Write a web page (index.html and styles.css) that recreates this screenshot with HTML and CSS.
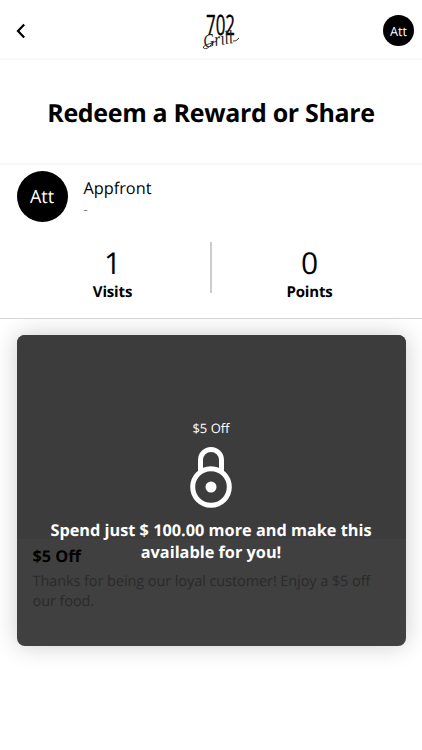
FILE: index.html
```html
<!DOCTYPE html>
<html lang="en">
<head>
<meta charset="utf-8">
<meta name="viewport" content="width=device-width, initial-scale=1">
<title>Redeem a Reward</title>
<link rel="stylesheet" href="styles.css">
</head>
<body>
<header class="topbar">
  <svg class="back" viewBox="0 0 10 16" aria-label="Back"><path d="M8.2 1.5 2 8l6.2 6.5"/></svg>
  <svg class="logo" viewBox="0 0 40 40" aria-label="702 Grill">
    <text class="logo-number" x="5" y="25" textLength="29" lengthAdjust="spacingAndGlyphs">702</text>
    <text class="logo-script" x="3" y="35" textLength="30" lengthAdjust="spacingAndGlyphs" transform="rotate(-9 20 35)">Grill</text>
    <path d="M12 31C10 37 5 40 2.500 38 1.500 35 9 34 16 31M32 31q3 1 6-3"/>
  </svg>
  <div class="avatar avatar-small">Att</div>
</header>
<section class="heading"><h1>Redeem a Reward or Share</h1></section>
<section class="profile">
  <div class="user">
    <div class="avatar">Att</div>
    <div class="user-text"><div class="name">Appfront</div><div class="detail">-</div></div>
  </div>
  <div class="stats">
    <div class="stat"><span class="value">1</span><span class="label">Visits</span></div>
    <div class="divider"></div>
    <div class="stat"><span class="value">0</span><span class="label">Points</span></div>
  </div>
</section>
<main class="rewards">
  <article class="card">
    <div class="photo"></div>
    <div class="card-body">
      <h2>$5 Off</h2>
      <p>Thanks for being our loyal customer! Enjoy a $5 off our food.</p>
    </div>
    <div class="overlay">
      <div class="offer">$5 Off</div>
      <svg class="lock" viewBox="0 0 42 62"><path d="M10.500 25V14a10.500 10.500 0 0 1 21 0v11"/><circle class="ring" cx="21" cy="41" r="18.3"/><circle class="dot" cx="21" cy="41" r="5.5"/></svg>
      <div class="message">Spend just $ 100.00 more and make this<br>available for you!</div>
    </div>
  </article>
</main>
</body>
</html>
```

FILE: styles.css
```css
* { box-sizing: border-box; }
body {
  margin: 0;
  height: 750px;
  overflow: hidden;
  background: #fff;
  color: #000;
  font-family: "Open Sans", "Noto Sans", sans-serif;
  text-rendering: geometricPrecision;
}
h1, h2, p { margin: 0; }
.topbar {
  display: grid;
  grid-template-columns: 1fr 40px 1fr;
  align-items: center;
  height: 60px;
  padding: 0 8px 0 15px;
  border-bottom: 2px solid #f8f8f8;
}
.back { width: 10px; height: 16px; margin: 3px 0 0 1px; }
.back path { fill: none; stroke: #000; stroke-width: 2.2; }
.logo { width: 40px; height: 40px; margin: 1px 0 0 6px; overflow: visible; }
.logo-number { font-size: 28px; stroke: #000; stroke-width: .4; }
.logo-script { font: italic 19px "Liberation Serif", serif; fill: #222; }
.logo path { fill: none; stroke: #222; stroke-width: .9; }
.avatar {
  display: flex;
  align-items: center;
  justify-content: center;
  width: 51px;
  height: 51px;
  border-radius: 50%;
  background: #000;
  color: #fff;
  font-size: 18px;
}
.avatar-small { width: 31px; height: 31px; font-size: 12.7px; justify-self: end; margin-top: 3px; }
.heading {
  display: flex;
  align-items: center;
  justify-content: center;
  height: 105px;
  border-bottom: 2px solid #f7f7f7;
}
h1 { font-size: 25px; line-height: 34px; font-weight: 700; white-space: nowrap; letter-spacing: -.33px; margin-top: 3px; }
.profile { height: 154px; padding-top: 6px; border-bottom: 1px solid #d4d4d4; }
.user { display: flex; gap: 16px; padding-left: 16.500px; }
.user-text { padding-top: 5px; }
.name { font-size: 16.3px; line-height: 24px; }
.detail { font-size: 13px; line-height: 18px; color: #777; }
.stats { display: flex; padding: 20px 15px 0; }
.stat { flex: 1; display: flex; flex-direction: column; align-items: center; }
.value { font-size: 30px; line-height: 42px; }
.label { font-size: 15px; line-height: 16px; font-weight: 700; letter-spacing: -.15px; }
.divider { width: 2px; height: 51px; background: #ccc; }
.rewards { padding: 16px 16.500px; overflow: hidden; height: 431px; }
.card {
  position: relative;
  height: 310.500px;
  border-radius: 8px;
  overflow: hidden;
  background: #404040;
  box-shadow: 0 0 24px rgba(0, 0, 0, .2);
}
.photo { height: 204px; background: #3c3c3c; }
.card-body { padding: 4px 16px; }
h2 { font-size: 16.3px; line-height: 26px; }
p { margin-top: 3px; font-size: 14.5px; line-height: 19.5px; letter-spacing: -.08px; color: #2a2a2a; }
.overlay {
  position: absolute;
  inset: 0;
  display: flex;
  flex-direction: column;
  align-items: center;
  padding: 83px 20px 0;
  color: #fff;
  text-align: center;
}
.offer { font-size: 13px; line-height: 20px; }
.lock { width: 42px; height: 62px; margin: 8px 0 11px; }
.lock path, .ring { fill: none; stroke: #fff; stroke-width: 5; }
.dot { fill: #fff; }
.message { font-size: 16.3px; line-height: 22px; font-weight: 700; white-space: nowrap; }
```
